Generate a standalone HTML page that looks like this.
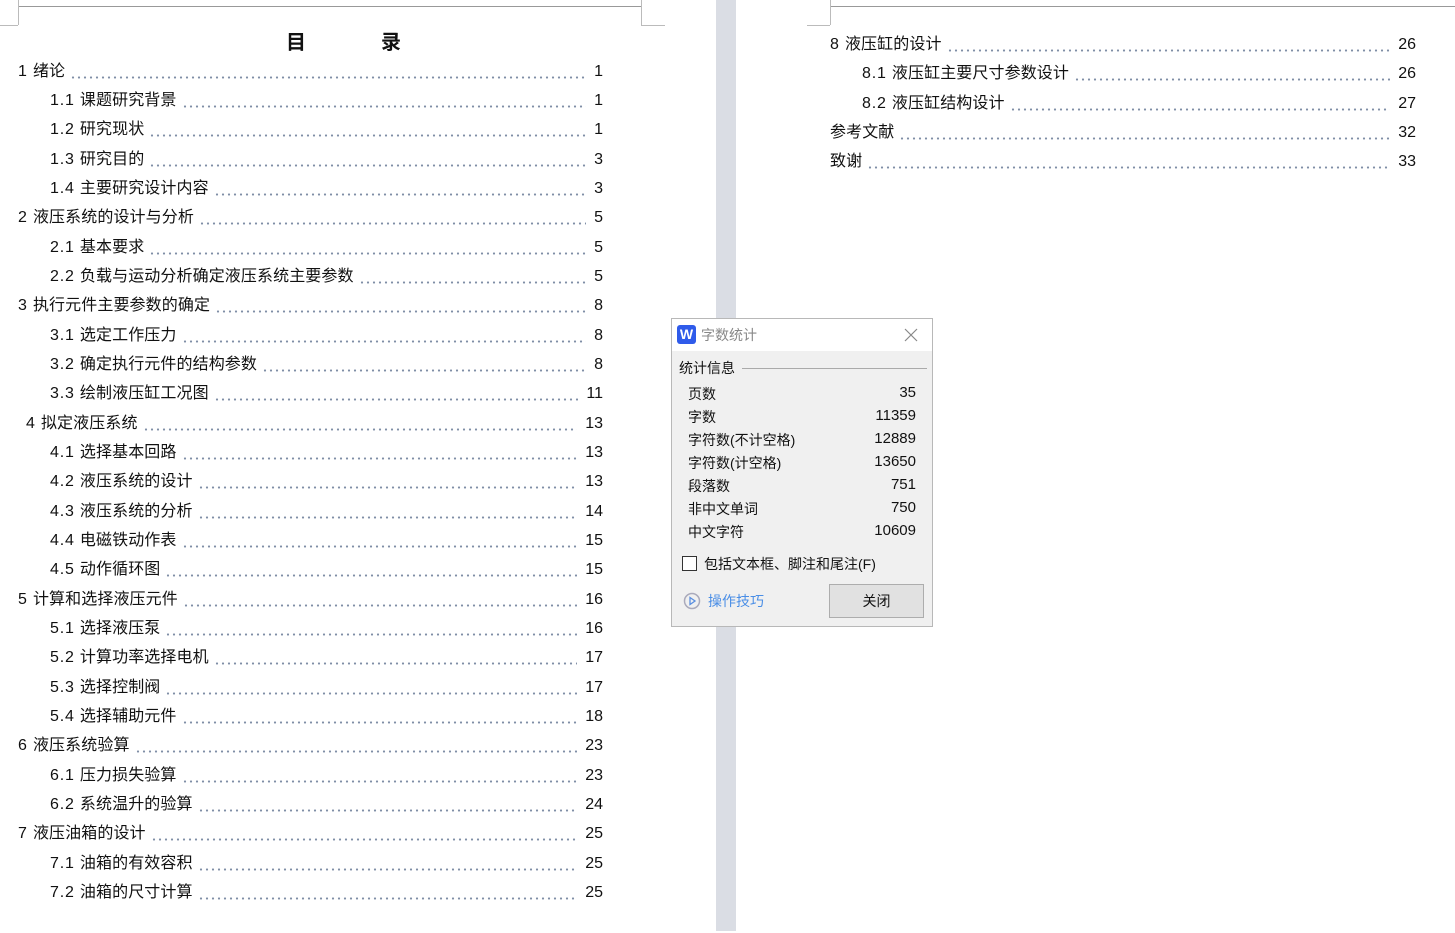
<!DOCTYPE html>
<html><head><meta charset="utf-8"><style>
*{margin:0;padding:0;box-sizing:border-box}
body{width:1455px;height:931px;background:#fff;position:relative;overflow:hidden;font-family:"Liberation Sans","Noto Sans CJK SC",sans-serif;color:#111}
.gap{position:absolute;left:716px;top:0;width:20px;height:931px;background:#dadde4}
.l{position:absolute;background:#999}
.rs{position:absolute;top:2px;left:0;width:1455px;height:931px}
.r{position:absolute;height:20px;display:flex;align-items:flex-end;font-size:16px;line-height:20px;white-space:nowrap}
.r .t{padding-right:5px;letter-spacing:0.1px}
.r .t i{font-style:normal;letter-spacing:0.8px}
.r .d{flex:1;height:20px;background:radial-gradient(circle,#7f8ea6 0.9px,transparent 1.3px) repeat-x;background-size:6px 3px;background-position:0 14px;margin-right:8px}
.title{position:absolute;top:26px;font-size:20px;font-weight:bold}
.dlg{position:absolute;left:671px;top:318px;width:262px;height:309px;background:#f0f0f0;border:1px solid #b8b8b8;font-size:14px;color:#111}
.dlg .tb{height:32px;background:#fff;position:relative}
.abs{position:absolute;white-space:nowrap}
.n{font-size:15px}
</style></head><body>
<div class="gap"></div>
<div class="l" style="left:18px;top:6px;width:623px;height:1px"></div>
<div class="l" style="left:18px;top:0;width:1px;height:25px;background:#bbb"></div>
<div class="l" style="left:0;top:25px;width:18px;height:1px;background:#bbb"></div>
<div class="l" style="left:641px;top:0;width:1px;height:25px;background:#bbb"></div>
<div class="l" style="left:641px;top:25px;width:24px;height:1px;background:#bbb"></div>
<div class="l" style="left:830px;top:6px;width:625px;height:1px"></div>
<div class="l" style="left:830px;top:0;width:1px;height:25px;background:#bbb"></div>
<div class="l" style="left:807px;top:25px;width:23px;height:1px;background:#bbb"></div>

<div class="title" style="left:286px">目</div>
<div class="title" style="left:381px">录</div>
<div class="rs">
<div class="r" style="left:18px;width:585px;top:60px"><span class="t"><i>1 </i>绪论</span><span class="d"></span><span>1</span></div>
<div class="r" style="left:50px;width:553px;top:89px"><span class="t"><i>1.1 </i>课题研究背景</span><span class="d"></span><span>1</span></div>
<div class="r" style="left:50px;width:553px;top:118px"><span class="t"><i>1.2 </i>研究现状</span><span class="d"></span><span>1</span></div>
<div class="r" style="left:50px;width:553px;top:148px"><span class="t"><i>1.3 </i>研究目的</span><span class="d"></span><span>3</span></div>
<div class="r" style="left:50px;width:553px;top:177px"><span class="t"><i>1.4 </i>主要研究设计内容</span><span class="d"></span><span>3</span></div>
<div class="r" style="left:18px;width:585px;top:206px"><span class="t"><i>2 </i>液压系统的设计与分析</span><span class="d"></span><span>5</span></div>
<div class="r" style="left:50px;width:553px;top:236px"><span class="t"><i>2.1 </i>基本要求</span><span class="d"></span><span>5</span></div>
<div class="r" style="left:50px;width:553px;top:265px"><span class="t"><i>2.2 </i>负载与运动分析确定液压系统主要参数</span><span class="d"></span><span>5</span></div>
<div class="r" style="left:18px;width:585px;top:294px"><span class="t"><i>3 </i>执行元件主要参数的确定</span><span class="d"></span><span>8</span></div>
<div class="r" style="left:50px;width:553px;top:324px"><span class="t"><i>3.1 </i>选定工作压力</span><span class="d"></span><span>8</span></div>
<div class="r" style="left:50px;width:553px;top:353px"><span class="t"><i>3.2 </i>确定执行元件的结构参数</span><span class="d"></span><span>8</span></div>
<div class="r" style="left:50px;width:553px;top:382px"><span class="t"><i>3.3 </i>绘制液压缸工况图</span><span class="d"></span><span>11</span></div>
<div class="r" style="left:26px;width:577px;top:412px"><span class="t"><i>4 </i>拟定液压系统</span><span class="d"></span><span>13</span></div>
<div class="r" style="left:50px;width:553px;top:441px"><span class="t"><i>4.1 </i>选择基本回路</span><span class="d"></span><span>13</span></div>
<div class="r" style="left:50px;width:553px;top:470px"><span class="t"><i>4.2 </i>液压系统的设计</span><span class="d"></span><span>13</span></div>
<div class="r" style="left:50px;width:553px;top:500px"><span class="t"><i>4.3 </i>液压系统的分析</span><span class="d"></span><span>14</span></div>
<div class="r" style="left:50px;width:553px;top:529px"><span class="t"><i>4.4 </i>电磁铁动作表</span><span class="d"></span><span>15</span></div>
<div class="r" style="left:50px;width:553px;top:558px"><span class="t"><i>4.5 </i>动作循环图</span><span class="d"></span><span>15</span></div>
<div class="r" style="left:18px;width:585px;top:588px"><span class="t"><i>5 </i>计算和选择液压元件</span><span class="d"></span><span>16</span></div>
<div class="r" style="left:50px;width:553px;top:617px"><span class="t"><i>5.1 </i>选择液压泵</span><span class="d"></span><span>16</span></div>
<div class="r" style="left:50px;width:553px;top:646px"><span class="t"><i>5.2 </i>计算功率选择电机</span><span class="d"></span><span>17</span></div>
<div class="r" style="left:50px;width:553px;top:676px"><span class="t"><i>5.3 </i>选择控制阀</span><span class="d"></span><span>17</span></div>
<div class="r" style="left:50px;width:553px;top:705px"><span class="t"><i>5.4 </i>选择辅助元件</span><span class="d"></span><span>18</span></div>
<div class="r" style="left:18px;width:585px;top:734px"><span class="t"><i>6 </i>液压系统验算</span><span class="d"></span><span>23</span></div>
<div class="r" style="left:50px;width:553px;top:764px"><span class="t"><i>6.1 </i>压力损失验算</span><span class="d"></span><span>23</span></div>
<div class="r" style="left:50px;width:553px;top:793px"><span class="t"><i>6.2 </i>系统温升的验算</span><span class="d"></span><span>24</span></div>
<div class="r" style="left:18px;width:585px;top:822px"><span class="t"><i>7 </i>液压油箱的设计</span><span class="d"></span><span>25</span></div>
<div class="r" style="left:50px;width:553px;top:852px"><span class="t"><i>7.1 </i>油箱的有效容积</span><span class="d"></span><span>25</span></div>
<div class="r" style="left:50px;width:553px;top:881px"><span class="t"><i>7.2 </i>油箱的尺寸计算</span><span class="d"></span><span>25</span></div>

<div class="r" style="left:830px;width:586px;top:33px"><span class="t"><i>8 </i>液压缸的设计</span><span class="d"></span><span>26</span></div>
<div class="r" style="left:862px;width:554px;top:62px"><span class="t"><i>8.1 </i>液压缸主要尺寸参数设计</span><span class="d"></span><span>26</span></div>
<div class="r" style="left:862px;width:554px;top:92px"><span class="t"><i>8.2 </i>液压缸结构设计</span><span class="d"></span><span>27</span></div>
<div class="r" style="left:830px;width:586px;top:121px"><span class="t">参考文献</span><span class="d"></span><span>32</span></div>
<div class="r" style="left:830px;width:586px;top:150px"><span class="t">致谢</span><span class="d"></span><span>33</span></div>
</div>

<div class="dlg">
 <div class="tb">
  <div class="abs" style="left:5px;top:6px;width:19px;height:19px;background:#2f5bea;border-radius:3px;color:#fff;font-weight:bold;font-size:14px;text-align:center;line-height:19px">W</div>
  <div class="abs" style="left:29px;top:6px;color:#888;font-size:14px">字数统计</div>
  <svg class="abs" style="left:232px;top:9px" width="14" height="14"><path d="M1 1L13 13M13 1L1 13" stroke="#888" stroke-width="1.2"/></svg>
 </div>
 <div class="abs" style="left:7px;top:39px">统计信息</div>
 <div class="abs" style="left:70px;top:49px;width:185px;height:1px;background:#aaa"></div>
 <div class="abs" style="left:16px;top:65px">页数</div><div class="abs n" style="right:16px;top:65px">35</div>
 <div class="abs" style="left:16px;top:88px">字数</div><div class="abs n" style="right:16px;top:88px">11359</div>
 <div class="abs" style="left:16px;top:111px">字符数(不计空格)</div><div class="abs n" style="right:16px;top:111px">12889</div>
 <div class="abs" style="left:16px;top:134px">字符数(计空格)</div><div class="abs n" style="right:16px;top:134px">13650</div>
 <div class="abs" style="left:16px;top:157px">段落数</div><div class="abs n" style="right:16px;top:157px">751</div>
 <div class="abs" style="left:16px;top:180px">非中文单词</div><div class="abs n" style="right:16px;top:180px">750</div>
 <div class="abs" style="left:16px;top:203px">中文字符</div><div class="abs n" style="right:16px;top:203px">10609</div>
 <div class="abs" style="left:10px;top:237px;width:15px;height:15px;border:1px solid #333;background:#fff"></div>
 <div class="abs" style="left:32px;top:235px">包括文本框、脚注和尾注(F)</div>
 <svg class="abs" style="left:11px;top:273px" width="18" height="18"><circle cx="9" cy="9" r="7.5" fill="none" stroke="#aab" stroke-width="1.5"/><path d="M7 5.5L12 9L7 12.5Z" fill="none" stroke="#5b8fe0" stroke-width="1.3"/></svg>
 <div class="abs" style="left:36px;top:272px;color:#4a8ee6">操作技巧</div>
 <div class="abs" style="left:157px;top:265px;width:95px;height:34px;border:1px solid #adadad;background:#e1e1e1;text-align:center;line-height:32px">关闭</div>
</div>
</body></html>
